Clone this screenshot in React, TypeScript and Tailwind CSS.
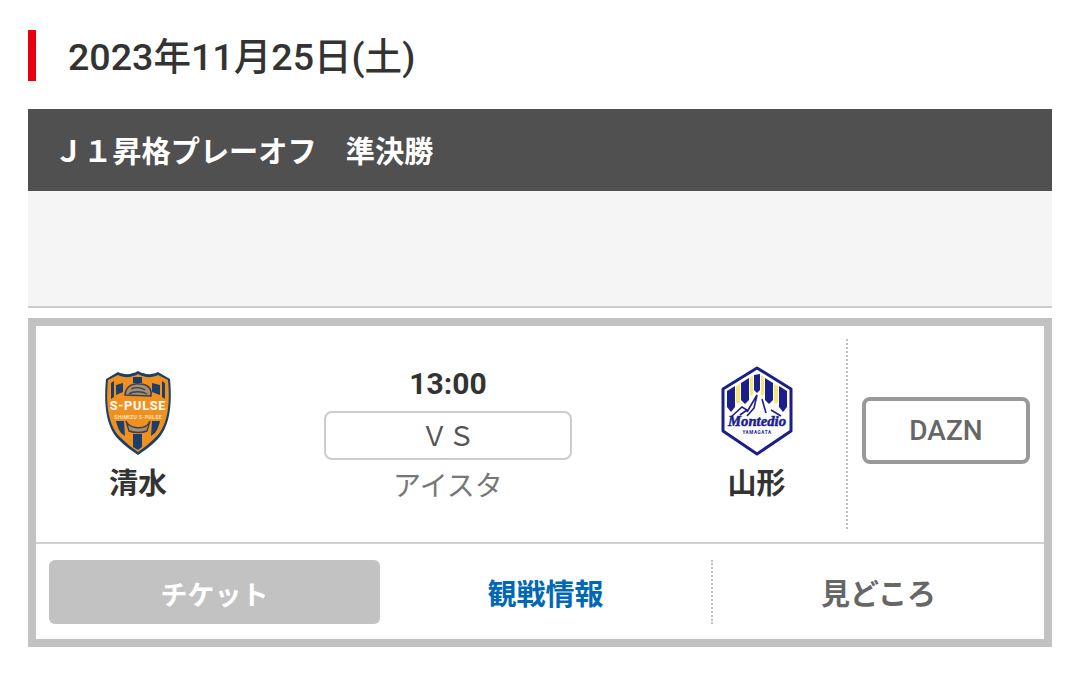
const FONT = "font-['Roboto','Noto_Sans_CJK_JP',sans-serif]";

const PulseLogo = () => (
  <svg width="68" height="84" viewBox="0 0 68 84" className="mb-[6px]">
    <path d="M34 0 C41 4 48 4 54 1 L66 8 C68 30 67 54 54 68 C47 75 40 80 34 84 C28 80 21 75 14 68 C1 54 0 30 2 8 L14 1 C20 4 27 4 34 0 Z" fill="#1a3f6b" />
    <path d="M34 3 C41 7 48 7 54 4 L64 9 C66 30 65 53 52 66 C46 72 40 77 34 81 C28 77 22 72 16 66 C3 53 2 30 4 9 L14 4 C20 7 27 7 34 3 Z" fill="#f0901f" />
    <path d="M29 6 H38 V12 H29 Z M12 14 L19 12 V21 L12 24 Z M56 14 L48 12 V21 L56 24 Z" fill="#1a3f6b" />
    <path d="M7 12 L10 10 V26 L7 28 Z M61 12 L58 10 V26 L61 28 Z" fill="#1a3f6b" />
    <path d="M21 24 C22 14 30 12 36 13 C44 13 48 18 47 25 Z" fill="#a28f74" stroke="#3c3f4c" strokeWidth="1.6" />
    <path d="M27 18 C31 16 37 16 41 19 M25 23 C29 20 38 20 43 23" fill="none" stroke="#3c3f4c" strokeWidth="1.3" />
    <text x="34" y="39" textAnchor="middle" fontSize="12.8" fontWeight="700" fill="#ffffff" fontFamily="Roboto, sans-serif" letterSpacing="0.7">S-PULSE</text>
    <text x="34" y="47.5" textAnchor="middle" fontSize="5.2" fontWeight="700" fill="#fbe3c2" fontFamily="Roboto, sans-serif" letterSpacing="0.3">SHIMIZU S-PULSE</text>
    <path d="M22 50 C25 58 42 60 46 50 L43 60 C38 62 30 62 25 60 Z" fill="#a28f74" stroke="#3c3f4c" strokeWidth="1.4" />
    <path d="M12 50 L20 50 L21 65 L17 62 C14 58 13 54 12 50 Z M56 50 L48 50 L47 65 L51 62 C54 58 55 54 56 50 Z" fill="#1a3f6b" />
    <path d="M29 63 H38 V76 L34 79 L29 76 Z" fill="#1a3f6b" />
  </svg>
);

const MontedioLogo = () => (
  <svg width="72" height="90" viewBox="0 0 72 90" className="mb-[10px]">
    <path d="M36 2 L70 23 V65 L36 88 L2 65 V23 Z" fill="#ffffff" stroke="#1c1f8a" strokeWidth="3" strokeLinejoin="round" />
    <path d="M6 25 L14 20 V41 L10 46 L6 41 Z" fill="#1c1f8a" />
    <path d="M15 20 L19 18 V36 L17 38 L15 36 Z" fill="#f2e675" />
    <path d="M20 17 L28 12 V34 L24 38 L20 34 Z" fill="#1c1f8a" />
    <path d="M29 12 L32 10 V28 L30.5 30 L29 28 Z" fill="#f2e675" />
    <path d="M33 9 L39 8 V24 L36 27 L33 24 Z" fill="#1c1f8a" />
    <path d="M40 9 L43 11 V28 L41.5 30 L40 28 Z" fill="#f2e675" />
    <path d="M44 12 L52 17 V34 L48 38 L44 34 Z" fill="#1c1f8a" />
    <path d="M53 18 L57 20 V36 L55 38 L53 36 Z" fill="#f2e675" />
    <path d="M58 20 L66 25 V41 L62 46 L58 41 Z" fill="#1c1f8a" />
    <path d="M8 52 L21 40 L27 43 L37 27 L50 43 L54 41 L66 52 Z" fill="#ffffff" />
    <path d="M10 51 L21 41 L26 44 L19 49 M26 46 L36 29 L33 42 L26 50 M41 33 L45 47 M50 44 L60 50" fill="none" stroke="#1c1f8a" strokeWidth="1.6" />
    <text x="36" y="60" textAnchor="middle" fontSize="14" fontWeight="700" fontStyle="italic" fill="#1c1f8a" stroke="#1c1f8a" strokeWidth="0.5" textLength="58" lengthAdjust="spacingAndGlyphs" fontFamily="'Liberation Serif', serif">Montedio</text>
    <text x="36" y="67.5" textAnchor="middle" fontSize="4.6" fontWeight="700" fill="#1c1f8a" fontFamily="Roboto, sans-serif" letterSpacing="0.6">YAMAGATA</text>
  </svg>
);

const Team = ({ name, logo }: { name: string; logo: React.ReactNode }) => (
  <div className="flex flex-col items-center">
    <div className="h-[92px] flex items-center justify-center">{logo}</div>
    <span className="mt-[2px] text-[29px] leading-[40px] font-bold text-[#333333]">{name}</span>
  </div>
);

export default function App() {
  return (
    <div className={`${FONT} w-[1080px] h-[673px] bg-white overflow-hidden px-[28px] pt-[30px]`}>
      <div className="h-[51px] border-l-[8px] border-[#e60012] pl-[32px] pt-[4px] flex items-center">
        <h2 className="text-[37.6px] leading-none font-medium text-[#333333]">2023年11月25日(土)</h2>
      </div>

      <div className="mt-[28px] h-[82px] bg-[#505050] pl-[26px] pt-[6px] flex items-center">
        <span className="text-[29.2px] font-bold text-white">Ｊ１昇格プレーオフ　準決勝</span>
      </div>
      <div className="h-[117px] bg-[#f5f5f5] border-b-2 border-[#cccccc]" />

      <div className="mt-[10px] h-[329px] border-[8px] border-[#c2c2c2] flex flex-col">
        <div className="h-[218px] border-b-2 border-[#d0d0d0] flex items-center">
          <div className="w-[204px] flex justify-center pt-[6px]">
            <Team name="清水" logo={<PulseLogo />} />
          </div>
          <div className="w-[416px] pt-[2px] flex flex-col items-center">
            <span className="text-[30px] leading-[40px] font-bold text-[#333333]">13:00</span>
            <div className="mt-[7px] w-[248px] h-[49px] pt-[5px] rounded-[8px] border-2 border-[#cccccc] flex items-center justify-center text-[27px] text-[#555555]">
              ＶＳ
            </div>
            <span className="mt-[7px] text-[28px] leading-[40px] text-[#777777]">アイスタ</span>
          </div>
          <div className="w-[179px] ml-[11px] flex justify-center pt-[6px]">
            <Team name="山形" logo={<MontedioLogo />} />
          </div>
          <div className="h-[190px] border-l-2 border-dotted border-[#c0c0c0] flex items-center pl-[14px]">
            <div className="w-[168px] h-[67px] mb-[8px] pt-[2px] rounded-[8px] border-[4px] border-[#999999] flex items-center justify-center text-[28px] font-medium text-[#666666]">
              DAZN
            </div>
          </div>
        </div>

        <div className="flex-1 flex items-center pl-[13px] pt-[1px]">
          <div className="w-[331px] h-[64px] pt-[8px] rounded-[6px] bg-[#c2c2c2] flex items-center justify-center text-[27px] font-bold text-white">
            チケット
          </div>
          <div className="w-[331px] h-[64px] pt-[8px] flex items-center justify-center text-[29px] font-bold text-[#0068b7]">観戦情報</div>
          <div className="flex-1 h-[64px] pt-[8px] border-l-2 border-dotted border-[#c0c0c0] flex items-center justify-center text-[29px] font-bold text-[#666666]">
            見どころ
          </div>
        </div>
      </div>
    </div>
  );
}
